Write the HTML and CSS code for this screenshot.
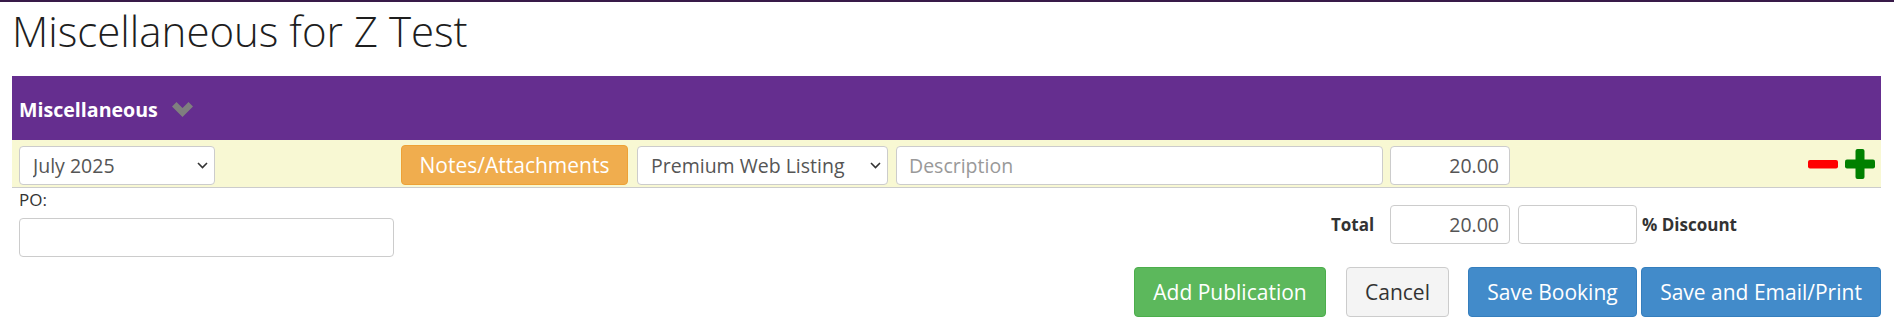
FILE: index.html
```html
<!DOCTYPE html>
<html lang="en">
<head>
  <meta charset="UTF-8">
  <title>Miscellaneous for Z Test</title>
  <link rel="stylesheet" href="styles.css">
</head>
<body>
  <div class="top-bar"></div>
  <div class="container">
    <h1>Miscellaneous for Z Test</h1>

    <div class="panel-heading">
      <span class="panel-title">Miscellaneous</span>
      <svg class="chevron" width="21" height="15" viewBox="0 0 21 15">
        <path d="M0 4.5 L4.5 0 L10.5 6 L16.5 0 L21 4.5 L10.5 15 Z" fill="#7f7f7f"/>
      </svg>
    </div>

    <div class="line-item">
      <span class="select-wrap">
        <select class="field month">
          <option>July 2025</option>
        </select>
        <svg class="caret" width="11" height="7" viewBox="0 0 11 7">
          <path d="M1 1 L5.5 5.5 L10 1" fill="none" stroke="#333" stroke-width="1.6"/>
        </svg>
      </span>
      <button class="btn btn-warning notes">Notes/Attachments</button>
      <span class="select-wrap product-wrap">
        <select class="field product">
          <option>Premium Web Listing</option>
        </select>
        <svg class="caret" width="11" height="7" viewBox="0 0 11 7">
          <path d="M1 1 L5.5 5.5 L10 1" fill="none" stroke="#333" stroke-width="1.6"/>
        </svg>
      </span>
      <input type="text" class="field description" placeholder="Description">
      <input type="text" class="field amount" value="20.00">
      <div class="row-actions">
        <svg width="30" height="30" viewBox="0 0 30 30">
          <rect x="0" y="11" width="30" height="8.5" rx="2" fill="#ff0000"/>
        </svg>
        <svg width="30" height="30" viewBox="0 0 30 30">
          <rect x="0" y="10.5" width="30" height="9" rx="2" fill="#008000"/>
          <rect x="10.5" y="0" width="9" height="30" rx="2" fill="#008000"/>
        </svg>
      </div>
    </div>

    <div class="summary">
      <div class="po-block">
        <label for="po">PO:</label>
        <input type="text" id="po" class="field po">
      </div>
      <div class="totals">
        <span class="total-label">Total</span>
        <input type="text" class="field amount" value="20.00">
        <input type="text" class="field discount">
        <span class="discount-label">% Discount</span>
      </div>
    </div>

    <div class="actions">
      <button class="btn btn-success">Add Publication</button>
      <button class="btn btn-default cancel">Cancel</button>
      <button class="btn btn-primary save">Save Booking</button>
      <button class="btn btn-primary save-email">Save and Email/Print</button>
    </div>
  </div>
</body>
</html>
```

FILE: styles.css
```css
body {
  margin: 0;
  font-family: "Open Sans", Arial, sans-serif;
  font-size: 17px;
  color: #333;
  background: #fff;
}
.top-bar {
  height: 2px;
  background-color: #381a48;
}
.container {
  padding: 0 13px 0 12px;
}
h1 {
  margin: 2px 0 18px;
  font-size: 42px;
  font-weight: 300;
  line-height: 54px;
  color: #1e1e1e;
}
.panel-heading {
  display: flex;
  align-items: center;
  height: 64px;
  padding: 2px 7px 0;
  box-sizing: border-box;
  background-color: #652e8f;
}
.panel-title {
  color: #fff;
  font-size: 19.6px;
  font-weight: 700;
}
.chevron {
  margin-left: 14px;
}
.line-item {
  display: flex;
  align-items: center;
  padding: 5px 6px 2px 7px;
  background-color: #f8f8d3;
  border-bottom: 1px solid #ccc;
}
.field {
  height: 39px;
  box-sizing: border-box;
  padding: 4px 12px;
  border: 1px solid #ccc;
  border-radius: 4px;
  background-color: #fff;
  font-family: "Open Sans", Arial, sans-serif;
  font-size: 19.5px;
  color: #555;
}
.field::placeholder {
  color: #999;
}
.select-wrap {
  position: relative;
  display: flex;
}
select.field {
  appearance: none;
  padding-left: 13px;
}
.caret {
  position: absolute;
  right: 7px;
  top: 16px;
}
.month {
  width: 196px;
}
.product-wrap {
  margin-left: 9px;
}
.product {
  width: 251px;
}
.description {
  width: 487px;
  margin-left: 8px;
}
.amount {
  width: 120px;
  margin-left: 7px;
  text-align: right;
  padding-right: 10px;
}
.row-actions {
  display: flex;
  gap: 7px;
  margin-left: auto;
  margin-top: -2px;
}
.summary {
  display: flex;
  align-items: flex-start;
  padding: 0 0 0 7px;
}
.po-block label {
  display: block;
  margin: 2px 0 8px;
  font-size: 17px;
  line-height: 20px;
}
.po {
  width: 375px;
}
.totals {
  display: flex;
  align-items: center;
  width: 550px;
  margin-left: auto;
  padding-top: 17px;
  font-size: 17px;
  font-weight: 700;
}
.total-label {
  width: 59px;
}
.totals .amount {
  margin-left: 0;
}
.discount {
  width: 119px;
  margin-left: 8px;
}
.discount-label {
  margin-left: 5px;
}
.actions {
  display: flex;
  justify-content: flex-end;
  margin-top: 10px;
}
.btn {
  height: 50px;
  padding: 0;
  border: 1px solid transparent;
  border-radius: 4px;
  font-family: "Open Sans", Arial, sans-serif;
  font-size: 21px;
  color: #fff;
  cursor: pointer;
}
.btn.notes {
  width: 227px;
  height: 40px;
  margin-left: 186px;
}
.btn-warning {
  background-color: #f0ad4e;
  border-color: #eea236;
}
.btn-success {
  width: 192px;
  background-color: #5cb85c;
  border-color: #4cae4c;
}
.btn-default {
  width: 103px;
  margin-left: 20px;
  background-color: #f4f4f4;
  border-color: #ccc;
  color: #333;
}
.btn-primary {
  background-color: #428bca;
  border-color: #357ebd;
}
.save {
  width: 169px;
  margin-left: 19px;
}
.save-email {
  width: 240px;
  margin-left: 4px;
}
```
